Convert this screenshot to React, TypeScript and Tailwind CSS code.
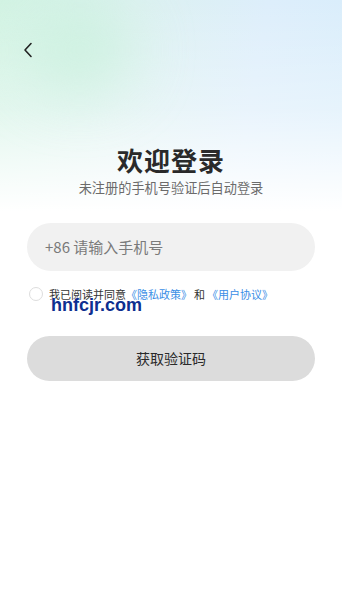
import React from "react";

export default function App() {
  return (
    <div
      className="relative w-[342px] h-[608px] overflow-hidden bg-white"
      style={{ fontFamily: '"Noto Sans CJK SC", "Noto Sans", sans-serif' }}
    >
      <div className="absolute inset-x-0 top-0 h-[240px] bg-[linear-gradient(180deg,rgba(255,255,255,0)_0%,rgba(255,255,255,0.35)_45%,#ffffff_88%),linear-gradient(100deg,#d2f3e3_0%,#dcf1f0_35%,#ddeefb_70%,#d8edfb_100%)]" />
      <div className="absolute left-[25px] top-[5px] w-[110px] h-[90px] rounded-full bg-[#c4f0d8] blur-[30px] opacity-60" />
      <div className="relative flex flex-col">
        <div className="h-[100px] pt-[41px] pl-[21px]">
          <svg width="14" height="18" viewBox="0 0 14 18" fill="none">
            <path d="M10 2.5 L4 9 L10 15.5" stroke="#222" strokeWidth="1.6" strokeLinecap="round" strokeLinejoin="round" />
          </svg>
        </div>
        <div className="mt-[43px] flex flex-col items-center">
          <div className="text-[26px] leading-[34px] font-bold text-[#2a2a2a] tracking-[1px]">欢迎登录</div>
          <div className="mt-[1px] text-[13.2px] leading-[20px] text-[#6b6b6b]">未注册的手机号验证后自动登录</div>
        </div>
        <div className="mx-[27px] mt-[25px] h-[48px] rounded-full bg-[#f1f1f1] flex items-center pl-[18px] text-[15px] text-[#7a7a7a]">
          +86 请输入手机号
        </div>
        <div className="mt-[15px] ml-[29px] flex items-center gap-[6px] text-[11px] leading-[16px] text-[#333]">
          <div className="w-[14px] h-[14px] rounded-full border border-[#dddddd] bg-white" />
          <div>
            我已阅读并同意<span className="text-[#3a8ee6]">《隐私政策》</span>
            <span className="mx-[2px]">和</span>
            <span className="text-[#3a8ee6]">《用户协议》</span>
          </div>
        </div>
        <button className="mx-[27px] mt-[34px] h-[45px] rounded-full bg-[#dcdcdc] text-[14px] text-[#2a2a2a]">
          获取验证码
        </button>
      </div>
      <div
        className="absolute left-[51px] top-[294px] text-[18px] leading-[22px] font-bold text-[#0e2f90]"
        style={{ fontFamily: '"Liberation Sans", sans-serif', textShadow: "0 0 2px #fff, 0 0 2px #fff" }}
      >
        hnfcjr.com
      </div>
    </div>
  );
}
